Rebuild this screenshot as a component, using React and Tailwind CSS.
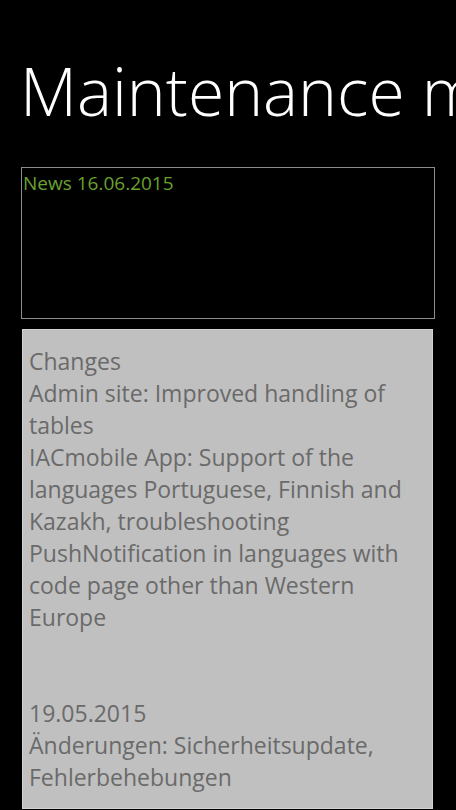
const changes = [
    'Changes',
    'Admin site: Improved handling of tables',
    'IACmobile App: Support of the languages Portuguese, Finnish and Kazakh, troubleshooting PushNotification in languages with code page other than Western Europe',
];

const older = [
    '19.05.2015',
    'Änderungen: Sicherheitsupdate, Fehlerbehebungen',
];

export default function App() {
    return (
        <div className="w-[456px] h-[810px] overflow-hidden bg-black" style={{ fontFamily: '"Open Sans", "Noto Sans", sans-serif' }}>
            {/* Title */}
            <div className="pl-[20px] pt-[50px] whitespace-nowrap overflow-hidden">
                <h1 className="text-[66px] leading-[80px] font-light text-white">Maintenance messages</h1>
            </div>

            {/* News box */}
            <div className="mt-[37px] ml-[21px] w-[414px] h-[152px] border border-[#8c8c8c] px-[1px]">
                <p className="text-[19px] leading-[30px] text-[#6aa12f]">News 16.06.2015</p>
            </div>

            {/* Content */}
            <div className="mt-[10px] ml-[22px] w-[411px] h-[480px] bg-[#c0c0c0] border border-[#d2d2d2] pl-[6px] pr-[10px] pt-[15px] text-[#6a6a6a] text-[23px] leading-[32px]">
                {changes.map((line) => (
                    <p key={line}>{line}</p>
                ))}
                <div className="h-[64px]" />
                {older.map((line) => (
                    <p key={line}>{line}</p>
                ))}
            </div>
        </div>
    );
}
